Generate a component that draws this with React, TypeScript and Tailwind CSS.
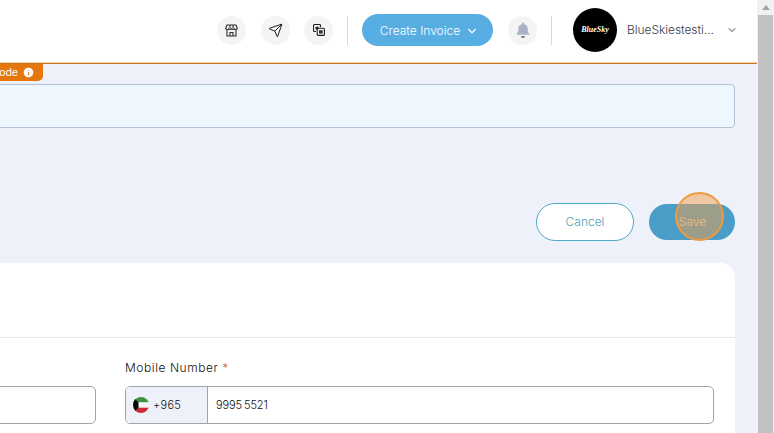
import React from "react";
import { ChevronDown, Send, Info } from "lucide-react";

function IconCircle({ children }: { children: React.ReactNode }) {
  return (
    <div className="flex h-[29px] w-[29px] items-center justify-center rounded-full bg-[#f4f4f4] text-[#222]">
      {children}
    </div>
  );
}

function Flag() {
  return (
    <svg width="16" height="16" viewBox="0 0 16 16" className="shrink-0">
      <defs>
        <clipPath id="flagc">
          <circle cx="8" cy="8" r="8" />
        </clipPath>
      </defs>
      <g clipPath="url(#flagc)">
        <rect width="16" height="5.4" fill="#3f9142" />
        <rect y="5.4" width="16" height="5.3" fill="#f7f7f7" />
        <rect y="10.7" width="16" height="5.3" fill="#ce2b37" />
        <path d="M0 0 L5.5 5.4 V10.7 L0 16 Z" fill="#0a0a0a" />
      </g>
    </svg>
  );
}

export default function App() {
  return (
    <div className="relative flex h-[433px] w-[774px] overflow-hidden bg-[#eef1f9] font-['Inter',sans-serif]">
      <main className="flex w-[757px] flex-col">
        <header className="flex h-[62px] shrink-0 items-center justify-end bg-white pr-[19px] pb-[2px]">
          <div className="flex gap-[14px]">
            <div className="mr-px">
              <IconCircle>
                <svg width="13" height="13" viewBox="0 0 13 13" fill="none" stroke="#2a2a2a" strokeWidth="1.1">
                  <path d="M2 1h9l1.3 3.4a1.6 1.6 0 0 1-3 .4 1.7 1.7 0 0 1-2.8 0 1.7 1.7 0 0 1-2.8 0 1.6 1.6 0 0 1-3-.4Z" />
                  <path d="M2 6.2V12h9V6.2" />
                  <path d="M5 1v3.4M8 1v3.4" />
                  <path d="M5 12V8.5h3V12" />
                </svg>
              </IconCircle>
            </div>
            <IconCircle>
              <Send size={15} strokeWidth={1.6} />
            </IconCircle>
            <IconCircle>
              <svg width="12" height="12" viewBox="0 0 12 12" fill="none" stroke="#222" strokeWidth="1.1">
                <path d="M7.500 3V1.500a1 1 0 0 0-1-1h-5a1 1 0 0 0-1 1v5a1 1 0 0 0 1 1H3" />
                <rect x="2.500" y="2.800" width="3" height="2.600" fill="#222" stroke="none" />
                <rect x="4.200" y="4.200" width="7.200" height="7.200" rx="1" />
                <rect x="6" y="6.200" width="3.600" height="3.400" fill="#333" stroke="none" />
              </svg>
            </IconCircle>
          </div>
          <div className="mx-[14px] h-[29px] w-px bg-[#d9d9d9]" />
          <button className="flex h-8 w-[131px] items-center justify-center gap-[5px] rounded-full bg-[#58aee2] pt-px pl-[4px] text-[12px] font-light text-white">
            Create Invoice
            <ChevronDown size={14} strokeWidth={2} />
          </button>
          <div className="ml-[15px]">
            <IconCircle>
              <svg width="14" height="16" viewBox="0 0 14 16" fill="#a9b2c6">
                <path d="M7 0.500a1 1 0 0 1 1 1v.7a4.500 4.500 0 0 1 3.600 4.400c0 3 .6 4.200 1.900 5.400v.7H.5v-.7C1.800 11.300 2.400 9.600 2.400 6.600A4.500 4.500 0 0 1 6 2.200v-.7a1 1 0 0 1 1-1Z" />
                <path d="M5 14h4a2 2 0 0 1-4 0Z" fill="#6b7280" />
              </svg>
            </IconCircle>
          </div>
          <div className="mx-[14px] h-[29px] w-px bg-[#d9d9d9]" />
          <div className="ml-[7px] flex h-[44px] w-[44px] items-center justify-center rounded-full bg-black font-['Liberation_Serif',serif] text-[8px] font-bold italic text-white">
            BlueSky
          </div>
          <span className="ml-[10px] w-[90px] whitespace-nowrap text-[12px] font-light tracking-[-0.05px] text-[#333c4c]">BlueSkiestesti...</span>
          <ChevronDown size={12} className="ml-[9px] text-[#414a5a]" />
        </header>
        <div className="h-px shrink-0 bg-[#f5d6b8]" />
        <div className="h-px shrink-0 bg-[#d0701f]" />

        <div className="flex h-[17px] w-[43px] shrink-0 items-center justify-end overflow-hidden rounded-br-[5px] bg-[#e5770f] pr-[8px] text-[10.5px] text-white">
          <span className="whitespace-nowrap">Mode</span>
          <Info size={13} className="ml-[4px] shrink-0" fill="#fff" stroke="#e5770f" />
        </div>

        <div className="mt-[3px] mr-[22px] -ml-[8px] h-[44px] shrink-0 rounded-[4px] border border-[#b4c2d8] bg-[#eef7fe]" />

        <div className="mt-[75px] mr-[22px] flex shrink-0 items-center justify-end gap-[15px]">
          <button className="h-[38px] w-[98px] rounded-full border border-[#4ea8c9] bg-white text-[12px] font-light text-[#4ea0b8]">
            Cancel
          </button>
          <button className="h-[36px] w-[86px] rounded-full bg-[#4a9dc7] pl-[1px] text-[12px] font-light text-[#f5d6ae]">
            Save
          </button>
        </div>

        <section className="mt-[22px] mr-[22px] -ml-[8px] flex-1 rounded-tr-[14px] bg-white">
          <div className="h-[75px] border-b border-[#e6e6e6]" />
          <div className="flex gap-[29px] pt-[21px]">
            <div className="flex w-[104px] flex-col pt-[27px]">
              <div className="h-[38px] rounded-r-[5px] border border-[#a0a4ab]" />
            </div>
            <div className="flex w-[589px] flex-col">
              <label className="text-[12px] leading-[18px] font-light tracking-[0.55px] text-[#111]">
                Mobile Number <span className="text-[#d9534f]">*</span>
              </label>
              <div className="mt-[9px] flex h-[38px] items-stretch overflow-hidden rounded-[5px] border border-[#a0a4ab]">
                <div className="flex w-[82px] items-center gap-[4px] border-r border-[#a0a4ab] bg-[#eef1f9] pl-[7px] text-[11px] font-light tracking-[0.3px] text-[#111]">
                  <Flag />
                  +965
                </div>
                <div className="flex flex-1 items-center pl-[8px] text-[11px] font-light tracking-[-0.1px] text-[#111] [word-spacing:-1px]">9995 5521</div>
              </div>
            </div>
          </div>
        </section>
      </main>

      <div className="flex w-[17px] flex-col bg-[#f1f1f1]">
        <div className="flex h-[15px] items-center justify-center">
          <div className="h-0 w-0 border-x-[4px] border-b-[5px] border-x-transparent border-b-[#a3a3a3]" />
        </div>
        <div className="ml-[1px] w-[15px] flex-1 bg-[#c1c1c1]" />
      </div>

      <div className="absolute left-[675px] top-[192px] h-[49px] w-[49px] rounded-full border-[2px] border-[#ee9a3e] bg-[#f0a04b]/50" />
    </div>
  );
}
